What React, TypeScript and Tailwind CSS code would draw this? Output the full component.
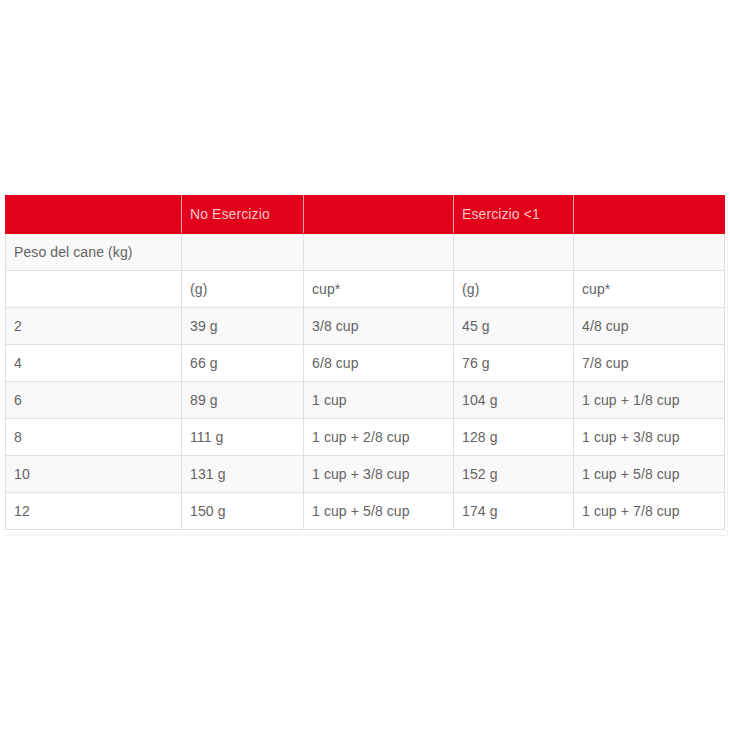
import React from 'react';

const rows: string[][] = [
  ['Peso del cane (kg)', '', '', '', ''],
  ['', '(g)', 'cup*', '(g)', 'cup*'],
  ['2', '39 g', '3/8 cup', '45 g', '4/8 cup'],
  ['4', '66 g', '6/8 cup', '76 g', '7/8 cup'],
  ['6', '89 g', '1 cup', '104 g', '1 cup + 1/8 cup'],
  ['8', '111 g', '1 cup + 2/8 cup', '128 g', '1 cup + 3/8 cup'],
  ['10', '131 g', '1 cup + 3/8 cup', '152 g', '1 cup + 5/8 cup'],
  ['12', '150 g', '1 cup + 5/8 cup', '174 g', '1 cup + 7/8 cup'],
];

const widths = ['w-[176px]', 'w-[122px]', 'w-[150px]', 'w-[120px]', 'w-[151px]'];

export default function App() {
  return (
    <div className="w-[730px] h-[730px] bg-white pt-[195px] pl-[5px]" style={{ fontFamily: '"Liberation Sans", Arial, sans-serif' }}>
      <div className="w-[723px] border-r border-b border-[#f3f3f3] pb-[5px]">
        <table className="border-collapse table-fixed w-[719px] text-[14px] text-[#636363] tracking-[0.1px]">
          <colgroup>
            {widths.map((w, i) => (
              <col key={i} className={w} />
            ))}
          </colgroup>
          <thead>
            <tr className="h-[38px] bg-[#e2001a] text-[#f9c6cb]">
              <th className="border border-[#e2001a] border-r-[#f0a0a8] font-normal text-left px-2"></th>
              <th className="border border-[#e2001a] border-r-[#f0a0a8] border-l-[#f0a0a8] font-normal text-left px-2">No Esercizio</th>
              <th className="border border-[#e2001a] border-r-[#f0a0a8] border-l-[#f0a0a8] font-normal text-left px-2"></th>
              <th className="border border-[#e2001a] border-r-[#f0a0a8] border-l-[#f0a0a8] font-normal text-left px-2">Esercizio &lt;1</th>
              <th className="border border-[#e2001a] border-l-[#f0a0a8] font-normal text-left px-2"></th>
            </tr>
          </thead>
          <tbody>
            {rows.map((r, i) => (
              <tr key={i} className={`h-[37px] ${i % 2 === 0 ? 'bg-[#f9f9f9]' : 'bg-white'}`}>
                {r.map((c, j) => (
                  <td key={j} className="border border-[#e0e0e0] px-2 align-middle">
                    {c}
                  </td>
                ))}
              </tr>
            ))}
          </tbody>
        </table>
      </div>
    </div>
  );
}
